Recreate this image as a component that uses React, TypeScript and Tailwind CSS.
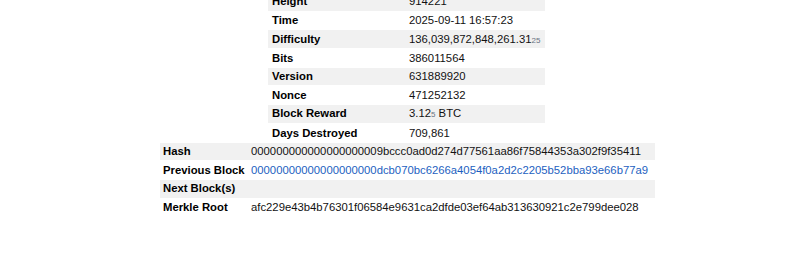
import React from 'react';

type Row = { label: string; value: React.ReactNode; link?: boolean };

const blockRows: Row[] = [
  { label: 'Height', value: '914221' },
  { label: 'Time', value: '2025-09-11 16:57:23' },
  {
    label: 'Difficulty',
    value: (
      <>
        136,039,872,848,261.31<span className="text-[8px] leading-none text-gray-500">25</span>
      </>
    ),
  },
  { label: 'Bits', value: '386011564' },
  { label: 'Version', value: '631889920' },
  { label: 'Nonce', value: '471252132' },
  {
    label: 'Block Reward',
    value: (
      <>
        3.12<span className="text-[8px] leading-none text-gray-500">5</span> BTC
      </>
    ),
  },
  { label: 'Days Destroyed', value: '709,861' },
];

const hashRows: Row[] = [
  { label: 'Hash', value: '000000000000000000009bccc0ad0d274d77561aa86f75844353a302f9f35411' },
  { label: 'Previous Block', value: '00000000000000000000dcb070bc6266a4054f0a2d2c2205b52bba93e66b77a9', link: true },
  { label: 'Next Block(s)', value: '' },
  { label: 'Merkle Root', value: 'afc229e43b4b76301f06584e9631ca2dfde03ef64ab313630921c2e799dee028' },
];

// striped table, every even row gets the grey band
const Table: React.FC<{ rows: Row[]; labelWidth: string; className: string; pad: string }> = ({ rows, labelWidth, className, pad }) => (
  <div className={className}>
    {rows.map((r, i) => (
      <div
        key={r.label}
        className={`flex items-center h-[18.7px] ${i % 2 === 0 ? 'bg-[#f1f1f1] border-b border-white' : ''}`}
      >
        <div className={`${labelWidth} ${pad} shrink-0 font-bold text-black`}>{r.label}</div>
        <div className={`whitespace-nowrap ${r.link ? 'text-[#1d5fbf]' : 'text-[#111]'}`}>{r.value}</div>
      </div>
    ))}
  </div>
);

export default function App() {
  return (
    <div className="w-[800px] h-[267px] overflow-hidden bg-white text-[11.3px] leading-none" style={{ fontFamily: '"Liberation Sans", Arial, sans-serif' }}>
      <Table rows={blockRows} labelWidth="w-[141px]" pad="pl-[4px]" className="ml-[268px] w-[277px] -mt-[7px]" />
      <Table rows={hashRows} labelWidth="w-[91px]" pad="pl-[3px]" className="ml-[160px] w-[495px]" />
    </div>
  );
}
